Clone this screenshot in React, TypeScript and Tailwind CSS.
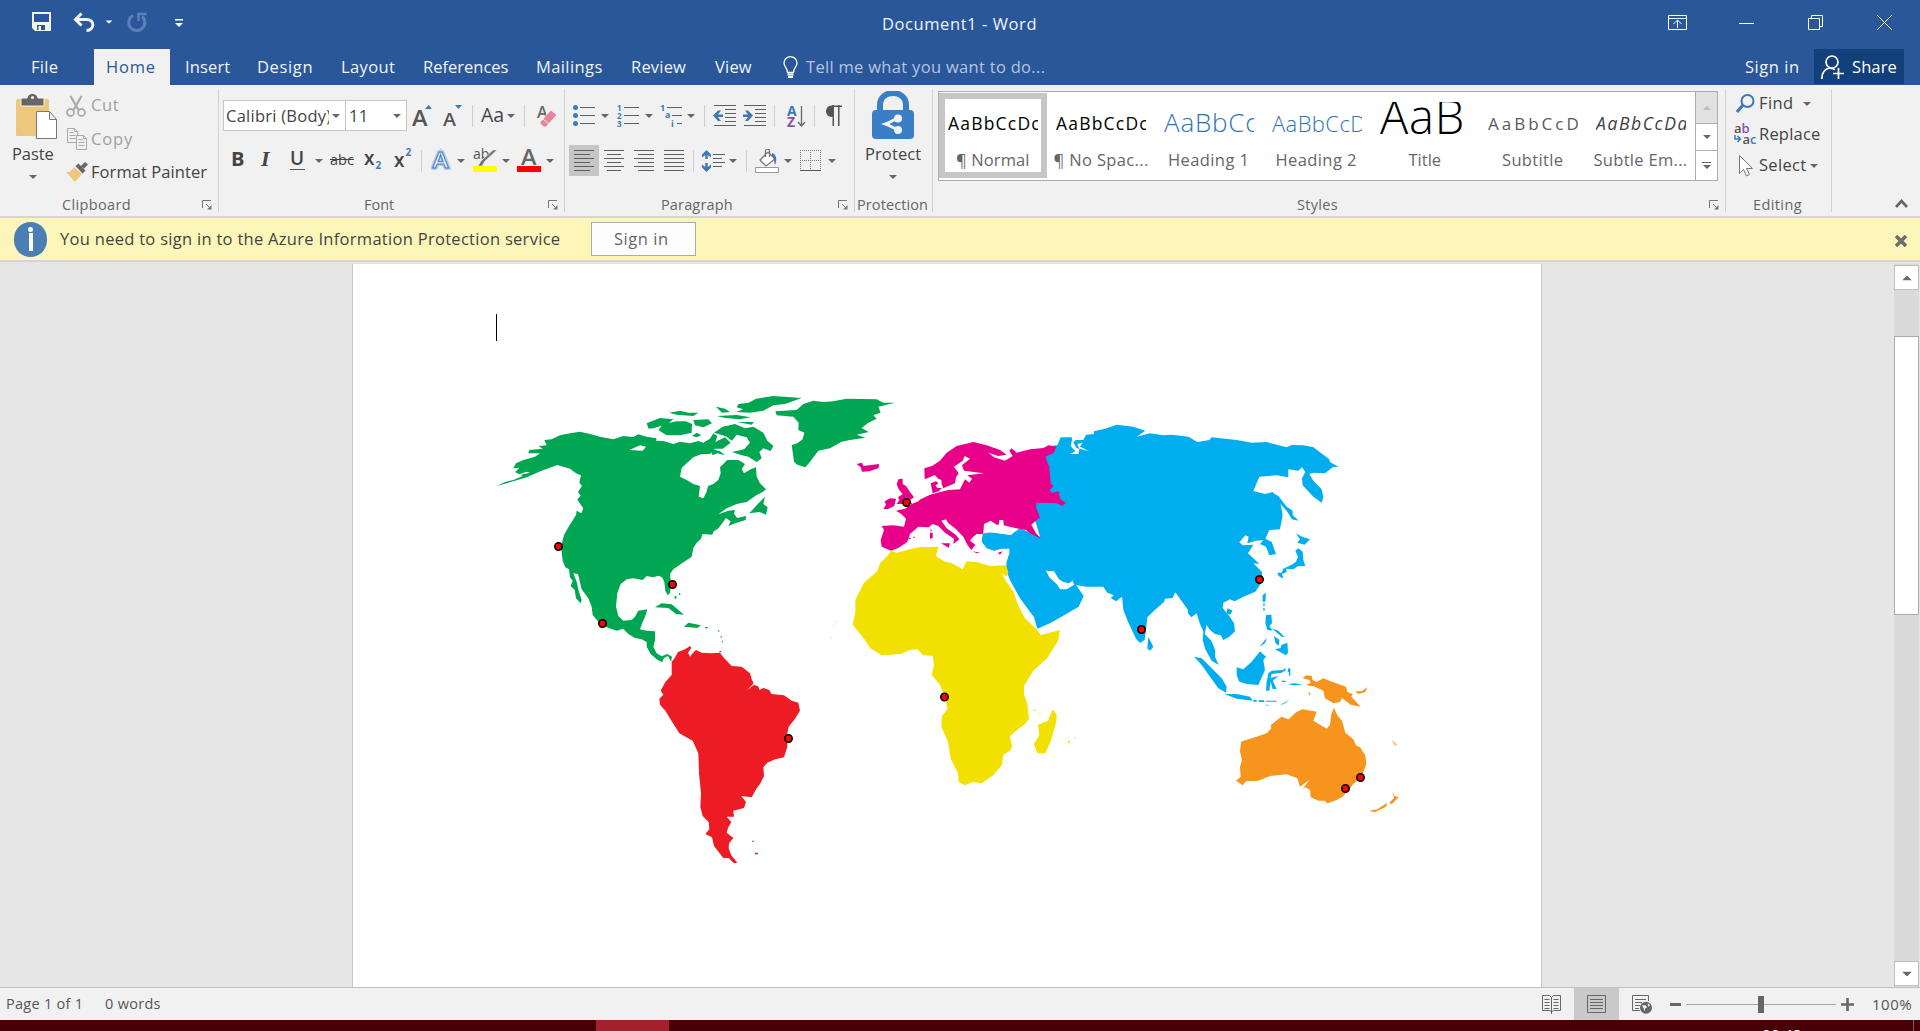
import React from "react";

const T = ({ c, children }: { c: string; children: React.ReactNode }) => (
  <span className={"block shrink-0 whitespace-pre leading-5 " + c}>{children}</span>
);

const Arrow = ({ c = "" }: { c?: string }) => (
  <svg className={"h-1 w-2 shrink-0 " + c} viewBox="0 0 8 4"><path d="M0 0h8L4 4z" fill="currentColor" /></svg>
);

const Sep = ({ c }: { c: string }) => <div className={"h-[22px] w-px shrink-0 bg-[#d0d0d0] " + c} />;
const Divider = () => <div className="mt-1 h-[123px] w-px shrink-0 bg-[#d2d2d2]" />;

const Launcher = ({ c = "" }: { c?: string }) => (
  <svg className={"absolute top-[6px] h-[10px] w-[10px] " + c} viewBox="0 0 10 10" fill="none" stroke="#777">
    <path d="M.5 8V.5H9M4 4l4 4" /><path d="M9.500 5v4.500H5z" fill="#777" stroke="none" />
  </svg>
);

const Label = ({ children, launcher }: { children: React.ReactNode; launcher?: string }) => (
  <div className="relative flex h-[22px] w-full items-center text-[14.5px] text-[#666]">
    {children}
    {launcher && <Launcher c={launcher} />}
  </div>
);

const Lines = ({ rows, c }: { rows: [number, number][]; c: string }) => (
  <svg className={"h-[22px] w-5 shrink-0 " + c} viewBox="0 0 20 22" stroke="#5f5f5f">
    {rows.map(([a, b], i) => <path key={i} d={`M${a} ${0.5 + i * 4}H${b}`} />)}
  </svg>
);

const Sample = ({ c, name, text, n, sel }: { c: string; name: string; text: string; n: string; sel?: boolean }) => (
  <div className={"flex h-[85px] w-[108px] shrink-0 flex-col " + (sel ? "border-[6px] border-[#c6c6c6] px-[3px]" : "px-[9px] py-[6px]")}>
    <div className="mt-[3px] h-[42px] w-[90px] overflow-hidden"><div className={"whitespace-pre " + c}>{text}</div></div>
    <div className="mt-[6px] flex justify-center text-[16.5px] text-[#666]"><T c={n}>{name}</T></div>
  </div>
);

const WorldMap = () => (
  <svg className="block h-[490px] w-[920px]" viewBox="490 390 920 490">
    <g transform="translate(480 380) scale(.33333)" fill="#00a651">
      <path d="M50 318L75 306 100 300 128 288 122 284 150 278 140 275 118 283 105 276 118 264 100 265 108 250 130 240 165 230 180 220 145 220 148 210 188 206 176 198 200 196 193 180 215 178 240 166 270 160 300 155 330 162 360 170 400 178 430 168 460 171 475 163 500 170 530 175 528 182 550 183 580 192 600 185 630 190 655 183 670 188 690 176 700 160 712 168 706 186 735 172 752 188 728 206 705 206 690 222 665 222 640 232 620 250 605 264 600 290 620 300 640 312 660 318 656 350 670 355 680 335 684 318 700 312 715 300 722 280 720 262 742 240 775 240 795 252 785 268 792 280 812 268 828 262 830 290 840 310 858 328 848 336 830 345 800 366 770 372 740 385 715 403 745 392 765 390 762 402 772 414 798 408 797 420 770 428 745 438 752 424 738 414 725 432 715 445 700 455 697 464 668 462 662 478 650 488 640 504 635 530 606 550 580 568 570 582 573 612 570 638 563 646 556 632 553 606 546 592 535 587 520 592 500 588 488 600 460 595 440 598 422 612 412 640 408 680 415 708 430 722 455 720 465 710 475 692 502 688 496 708 487 728 480 748 500 752 525 754 525 780 520 800 530 820 545 829 562 822 576 830 573 845 564 828 552 834 546 847 530 838 512 822 500 800 500 786 485 778 465 774 445 762 430 746 410 752 380 742 355 725 338 705 335 680 325 655 305 628 294 582 280 580 290 605 296 632 305 660 302 670 288 655 284 630 272 618 278 602 270 592 267 568 256 562 248 542 243 500 252 465 266 440 288 405 290 392 304 400 310 385 298 368 292 358 302 347 294 335 306 318 298 308 303 286 288 280 270 266 232 255 185 272 140 292 100 304Z" />
      <path d="M808 400L830 376 855 350 850 372 863 382 858 404 838 396ZM702 158L728 140 765 132 795 145 820 140 850 158 862 182 880 198 872 213 850 205 838 216 845 235 830 246 805 230 780 224 756 216 792 208 810 188 800 172 770 164 756 182 740 170 725 165ZM535 150L550 132 590 124 618 124 636 132 635 158 600 166 560 166ZM500 130L540 114 580 118 562 132 520 145 506 146ZM568 98L600 92 625 98 655 98 640 108 590 104ZM640 120L685 118 696 130 670 142 645 136ZM636 168L650 158 664 166 650 172ZM690 206L720 214 735 226 712 220 698 226ZM710 108L770 105 812 112 780 118 736 114ZM768 96L790 88 770 82 776 72 806 68 828 56 880 48 965 54 915 72 880 76 850 92 810 98ZM708 80L735 86 750 96 726 98ZM770 126L822 126 815 134ZM886 94L950 90 970 72 1000 62 1030 66 1060 64 1100 56 1190 58 1210 68 1245 68 1195 80 1202 98 1180 106 1190 116 1165 128 1145 144 1166 156 1130 164 1156 173 1110 180 1085 185 1050 205 1015 212 990 245 976 262 952 254 942 245 938 215 935 195 952 190 968 178 973 158 955 150 956 128 940 110 890 106ZM525 682L545 670 575 673 612 704 588 702 565 684ZM612 740L625 728 663 736 652 744ZM584 648h5v8h-5ZM597 640h4v5h-4ZM675 741h8v4h-8ZM722 768h3v5h-3ZM726 782h3v5h-3ZM715 750h3v5h-3ZM718 813h6v4h-6Z" />
      <path d="M448 210L480 196 498 200 488 212Z" fill="#fff" />
    </g>
    <g transform="translate(640 630) scale(.33333)" fill="#ed1c24">
      <path d="M95 95L104 84 114 66 135 58 150 48 154 54 144 68 150 80 158 70 168 60 185 68 215 70 240 68 250 82 275 108 305 110 330 130 335 148 341 160 320 182 342 164 356 170 358 180 370 174 388 180 394 192 432 196 455 212 475 218 480 242 464 268 446 290 441 315 442 350 432 382 405 388 382 398 370 412 372 438 360 462 350 475 335 502 304 498 318 516 312 534 280 542 282 560 260 560 274 576 264 594 260 608 280 624 267 640 266 655 274 676 292 698 282 700 266 684 250 684 222 648 216 622 196 612 208 598 206 576 188 558 181 530 183 490 177 430 175 370 158 332 118 310 98 278 76 242 60 224 58 206 70 194 62 182 76 156 95 135ZM336 632h6v3h-6ZM344 668h10v5h-8Z" />
    </g>
    <g transform="translate(970 410) scale(.33333)" fill="#00aeef">
      <path d="M240 108L262 106 272 82 305 82 308 98 318 90 340 90 348 74 372 72 372 64 405 56 440 44 490 50 526 62 500 80 540 70 580 76 605 74 655 80 682 96 718 90 725 82 800 90 845 98 890 96 950 112 965 105 1000 106 1030 112 1078 148 1080 156 1105 170 1088 172 1065 190 1030 188 1018 192 1030 212 1055 238 1060 262 1055 278 1030 260 998 226 996 205 1006 186 996 172 985 182 955 178 955 202 920 196 868 200 850 243 885 252 908 246 930 272 938 315 930 358 898 360 886 386 905 396 918 432 898 436 888 410 870 402 880 390 858 392 832 400 836 380 826 376 808 397 818 406 850 404 834 430 868 462 850 460 876 486 876 515 856 545 820 560 794 574 780 568 760 578 758 594 778 618 792 640 795 664 778 680 760 690 752 676 735 672 720 660 710 645 704 672 724 692 736 722 735 740 746 765 725 752 706 718 698 690 700 664 690 642 680 610 664 622 654 610 654 600 630 566 616 547 608 564 585 566 582 576 552 602 532 622 528 660 524 690 510 699 498 686 474 635 460 600 456 560 438 574 422 564 432 556 412 548 400 530 350 530 312 524 308 512 296 520 278 515 266 506 252 484 228 482 238 502 262 524 270 538 290 538 316 522 341 558 326 590 282 616 240 640 202 656 192 622 150 565 120 510 108 480 110 455 118 430 118 416 95 416 72 422 50 415 35 395 38 372 55 366 120 375 150 355 210 380 180 280 225 135Z" />
      <path d="M910 250L925 258 950 290 968 302 968 315 986 332 966 328 952 305 930 280ZM978 370L996 380 1020 388 1004 404 982 398 990 388ZM985 415L998 425 1000 450 1006 468 985 468 970 478 948 476 950 486 936 492 940 506 926 498 922 488 935 488 940 476 965 464 978 455 984 440 976 422ZM888 548L886 575 878 575 878 556ZM772 595L788 602 780 614 770 610ZM535 680L550 710 540 722 532 715ZM888 615L904 614 906 640 898 648 908 662 892 660 886 640ZM880 580h4v8h-4ZM880 594h4v8h-4ZM905 655L925 662 944 682 935 680ZM912 678L928 690 926 708 916 698ZM868 712L890 683 886 698ZM934 705L952 698 954 728 948 736 915 718 932 714ZM672 740L695 745 725 775 755 805 770 830 768 848 745 835 720 800 695 765ZM763 852L800 852 840 860 848 872 800 866ZM800 772L820 778 845 755 870 724 888 740 880 750 885 780 865 825 830 822 808 815 800 795ZM895 790L905 782 940 780 944 774 948 780 935 788 905 792 902 804 926 798 908 812 920 836 908 838 902 815 898 842 888 842 890 815ZM955 775h6v22h-4v-10h-4ZM953 822L975 820 998 824 970 826ZM850 870h10v5h-10ZM866 871h16v5h-16ZM888 872h32v3h-32ZM885 882L902 888 890 886ZM926 888L960 868 945 880ZM935 812h12v4h-12Z" />
      <path d="M42 345L58 333 82 345 86 330 98 332 102 348 130 354 134 364 122 374 70 366 40 368Z" fill="#fff" />
      <path d="M306 90L318 112 328 118 325 132 300 132 316 124 302 108ZM338 98L330 110 358 124 328 116 322 102Z" fill="#fff" />
    </g>
    <g transform="translate(830 420) scale(.33333)" fill="#e8008a">
      <path d="M155 318L190 316 222 320 228 296 214 282 198 272 225 266 245 252 265 244 282 228 302 220 300 190 284 175 283 145 306 138 330 122 350 98 380 78 430 66 470 76 510 90 530 104 505 108 475 98 492 112 525 122 548 108 538 92 545 85 560 98 600 88 640 84 655 76 680 80 670 100 646 110 658 142 662 190 670 198 658 212 668 218 686 214 690 236 707 248 698 258 680 250 640 248 618 250 620 268 630 292 604 314 618 340 634 357 600 340 588 330 545 322 465 315 460 342 440 342 428 352 420 362 436 374 424 390 412 374 400 350 375 325 355 310 348 298 334 302 350 325 378 345 388 358 370 372 372 356 345 338 325 318 308 312 296 322 265 320 240 342 232 366 205 384 183 392 155 380 152 360 162 330ZM205 178L218 176 218 192 228 198 240 216 252 232 240 240 246 252 200 252 208 240 204 232 218 222 206 208 200 192ZM160 266L168 254 164 244 180 235 198 236 193 258 172 268ZM80 132L96 128 100 138 147 132 146 144 118 154 96 155 92 142ZM333 370L360 370 356 383ZM300 338L308 338 308 354 300 356ZM302 324L306 334 302 334ZM428 394L450 398 440 400ZM504 398L518 394 510 404ZM236 354h6v3h-6ZM250 350h5v3h-5Z" />
      <path d="M420 116L404 108 398 122 372 140 386 160 378 172 375 190 350 200 340 205 335 192 334 180 325 176 314 165 285 178 280 200 272 238 300 224 322 218 355 210 390 208 405 178 418 188 426 176 412 166 462 160 432 156 402 152 396 136Z" fill="#fff" />
      <path d="M302 190L318 184 326 190 316 196 322 204 336 204 326 214 308 220Z" />
      <path d="M462 312L482 302 500 314 506 314 508 300 520 300 521 316 545 322 553 334 545 344 520 340 490 335 460 340Z" fill="#fff" />
    </g>
    <g transform="translate(830 420) scale(.33333)" fill="#f2e000">
      <path d="M183 393L200 398 232 390 265 382 325 380 318 408 342 424 366 430 398 448 410 424 440 426 480 438 528 436 535 456 530 470 515 458 528 484 550 514 562 550 574 574 584 594 618 626 632 645 690 630 684 662 652 714 610 752 582 798 582 824 592 850 597 896 585 912 566 926 540 948 546 980 540 992 520 1004 516 1034 490 1066 455 1090 428 1086 405 1096 386 1086 384 1060 362 1016 354 965 334 920 336 888 352 868 346 832 330 795 305 764 312 735 308 708 280 706 262 688 240 690 212 702 155 706 120 684 102 656 68 614 76 578 76 540 102 488 142 454 150 430 172 408ZM668 868L680 884 679 906 662 964 646 1000 622 1000 612 972 628 945 624 914 654 902ZM612 869h5v4h-5ZM627 880h5v3h-5ZM714 963h6v5h-6ZM734 954h4v3h-4ZM0 653h4v4h-4ZM12 615h3v4h-3ZM17 605h3v4h-3Z" />
    </g>
    <g transform="translate(1140 560) scale(.33333)" fill="#f7941d">
      <path d="M303 545L318 540 350 530 380 520 394 505 392 496 424 470 446 478 465 460 488 448 530 455 520 482 560 506 570 494 574 462 582 443 592 466 606 482 616 518 640 538 648 556 660 562 676 586 679 612 665 650 640 672 608 710 585 722 562 730 554 722 535 722 512 712 510 690 496 682 488 686 508 660 480 680 472 655 440 643 390 648 355 662 318 664 308 676 288 662 302 650 300 620 306 600 300 575ZM488 355L498 346 515 348 518 360 530 366 550 355 578 366 618 380 622 396 638 402 634 410 662 440 632 434 606 414 600 426 580 430 555 415 550 392 520 378 508 378 500 374 512 368 508 360ZM645 394L665 394 682 382 676 396 655 402ZM505 396L512 400 508 408ZM466 458L482 450 480 458ZM688 752L712 748 742 728 738 740 704 757ZM758 694L764 708 776 712 755 733 748 728 762 714ZM754 538L771 556 764 554Z" />
    </g>
    <g fill="red" stroke="#000" strokeWidth="1.600">
      {[[558.5, 546.5], [672.5, 584.5], [602.5, 623.5], [788.5, 738.5], [906.5, 502.5], [944.5, 697], [1259.500, 579.500], [1141.500, 629.500], [1345.500, 788.500], [1360.500, 777.500]].map(([x, y]) => <circle key={x} cx={x} cy={y} r="3.700" />)}
    </g>
  </svg>
);

export default function App() {
  return (
    <div className="flex h-[1031px] w-[1920px] flex-col overflow-hidden bg-[#e6e6e6] font-['Open_Sans','Noto_Sans',sans-serif] text-[16.5px] text-[#444]">
      <header className="h-[85px] shrink-0 bg-[#2a579a] text-[#f0f3f8]">
        <div className="flex h-[49px] items-start">
          <svg className="ml-8 mt-3 h-[19px] w-[19px]" viewBox="0 0 19 19"><path fillRule="evenodd" d="M0 0h19v19H3l-3-3zM2 2v8h15V2zM5 13v5h1.500v-4H9v4h4v-5z" fill="#f3f3f3" /></svg>
          <svg className="ml-[22px] mt-3 h-5 w-[23px]" viewBox="0 0 23 20" fill="none" stroke="#f3f3f3" strokeWidth="3"><path d="M2 7.500h11.500c8.500 0 8.500 10.500 0 11" /><path d="M8.500 1.500L2.500 7.500l6 6" /></svg>
          <Arrow c="ml-[9px] mt-5 scale-90" />
          <svg className="ml-[14px] mt-3 h-5 w-5 text-[#5f80b5]" viewBox="0 0 20 20" fill="none" stroke="currentColor" strokeWidth="3"><path d="M6 3.500a8 8 0 1 0 9 1" /><path d="M11.500 1v8M11 2h8.500" strokeWidth="2.500" /></svg>
          <svg className="ml-[28px] mt-[19px] h-2 w-2" viewBox="0 0 8 8" fill="#fff"><path d="M0 0h8v1.500H0zM0 4h8L4 8z" /></svg>
          <T c="ml-[699px] mt-[14px] w-[154px] tracking-[0.58px]">Document1 - Word</T>
          <svg className="ml-[632px] mt-[15px] h-[15px] w-[19px]" viewBox="0 0 19 15" fill="none" stroke="#fff"><path d="M.5.5h18v14H.5zM.5 3.500h18M9.500 13V5.500M5.500 9l4-4 4 4" /></svg>
          <div className="ml-[52px] mt-[23px] h-px w-[15px] bg-white" />
          <svg className="ml-[54px] mt-[15px] h-[15px] w-[15px]" viewBox="0 0 15 15" fill="none" stroke="#fff"><path d="M.5 3.500h11v11H.5zM3.500 3.500v-3h11v11h-3" /></svg>
          <svg className="ml-[54px] mt-[15px] h-[15px] w-[15px]" viewBox="0 0 15 15" stroke="#fff"><path d="M0 0l15 15M15 0L0 15" /></svg>
        </div>
        <nav className="flex h-9 items-center">
          <T c="ml-[31px] w-[26px] tracking-[0.3px]">File</T>
          <div className="ml-[37px] flex h-9 w-[76px] items-center bg-[#f1f1f1] text-[#2a579a]"><T c="ml-[12px] w-[50px] tracking-[0.8px]">Home</T></div>
          <T c="ml-[15px] w-[44px] tracking-[0.15px]">Insert</T>
          <T c="ml-[28px] w-[56px] tracking-[0.65px]">Design</T>
          <T c="ml-[28px] w-[54px] tracking-[0.4px]">Layout</T>
          <T c="ml-[28px] w-[85px]">References</T>
          <T c="ml-[28px] w-[66px] tracking-[0.4px]">Mailings</T>
          <T c="ml-[29px] w-[55px] tracking-[0.2px]">Review</T>
          <T c="ml-[29px] w-[37px] tracking-[0.2px]">View</T>
          <svg className="ml-[31px] h-[22px] w-[15px]" viewBox="0 0 15 22" fill="none" stroke="#fff" strokeWidth="1.300"><path d="M4.500 16.500C4.500 12 1 11 1 7a6.500 6.300 0 0 1 13 0c0 4-3.500 5-3.500 9.500z" /><path d="M4.500 18.500h6M5 21h5" strokeWidth="1.800" /></svg>
          <T c="ml-2 w-[238px] tracking-[0.31px] text-[#b4c5e0]">Tell me what you want to do...</T>
          <T c="ml-[701px] w-[54px] tracking-[0.55px]">Sign in</T>
          <div className="ml-[15px] mb-px flex h-[35px] w-[90px] items-center bg-[#12407a]">
            <svg className="ml-[7px] mt-px h-6 w-[23px]" viewBox="0 0 23 24" fill="none" stroke="#fff" strokeWidth="1.700"><circle cx="11" cy="7" r="6" /><path d="M.8 24C1 17.500 4 13.500 9 13l5 1.500M12 18.500h11M17.500 13v11" /></svg>
            <T c="ml-2 w-[45px] tracking-[0.1px] text-white">Share</T>
          </div>
        </nav>
      </header>

      <section className="flex h-[131px] shrink-0 bg-[#f1f1f1]">
        <div className="flex w-[218px] flex-col">
          <div className="flex h-[109px]">
            <div className="flex w-[66px] flex-col pt-2">
              <svg className="ml-[15px] h-[48px] w-[43px]" viewBox="15 93 43 48"><rect x="16" y="99" width="33" height="37" rx="1.500" fill="#eec77e" /><path d="M21 98h6c1-6 10-6 11 0h6v8H21z" fill="#666" stroke="#f1f1f1" /><circle cx="32.500" cy="97.500" r="1.600" fill="#f1f1f1" /><path d="M36.500 111.500h13l7 8v19h-20zM49.500 111.500v8h7" fill="#fff" stroke="#777" /></svg>
              <T c="ml-[12px] mt-[3px] w-[43px] tracking-[-0.1px]">Paste</T>
              <Arrow c="ml-[29px] mt-[11px] text-[#666]" />
            </div>
            <div className="flex flex-col pt-[4px]">
              <div className="flex h-[33px] items-center text-[#a0a0a0]">
                <svg className="h-[22px] w-5" viewBox="0 0 20 22" fill="none" stroke="#aaa" strokeWidth="1.800"><path d="M4.500 1l8 14M15.500 1l-8 14" strokeWidth="2.200" /><circle cx="4.500" cy="17.500" r="3.500" /><circle cx="15.500" cy="17.500" r="3.500" /></svg>
                <T c="ml-[5px] -mt-px w-[29px] tracking-[0.6px]">Cut</T>
              </div>
              <div className="flex h-[33px] items-center text-[#a0a0a0]">
                <svg className="ml-px h-[22px] w-5" viewBox="0 0 20 22" fill="#f1f1f1" stroke="#aaa"><path d="M.5.5h7l3 3v11H.5zM7.500.5v3h3M2.500 4.500h4M2.500 7.500h6M2.500 10.500h6" /><path d="M9.500 7.500h7l3 3v11h-10zM16.500 7.500v3h3M11.500 11.500h4M11.500 14.500h6M11.500 17.500h6" /></svg>
                <T c="ml-[4px] w-[43px] tracking-[0.9px]">Copy</T>
              </div>
              <div className="flex h-[33px] items-center">
                <svg className="h-5 w-[22px]" viewBox="0 0 22 20"><path d="M8 5l8 7-7 8L0 10c4 1 6-2 8-5z" fill="#eec77e" /><path d="M9.500 4l3-2.500 7 7-3 3zM15 4l4-4 3 2.500-4 4z" fill="#666" /></svg>
                <T c="ml-[3px] w-[117px] tracking-[0.07px]">Format Painter</T>
              </div>
            </div>
          </div>
          <Label launcher="left-[202px]"><T c="ml-[62px] w-[70px] tracking-[0.35px]">Clipboard</T></Label>
        </div>
        <Divider />

        <div className="flex w-[345px] flex-col">
          <div className="h-[109px] pt-[15px]">
            <div className="flex h-[31px] items-center">
              <div className="ml-1 flex h-[31px] w-[123px] items-center border border-[#c6c6c6] bg-white"><div className="ml-[2px] w-[103px] overflow-hidden"><T c="w-[106px] tracking-[0.25px]">Calibri (Body)</T></div><Arrow c="ml-[3px] text-[#666]" /></div>
              <div className="-ml-px flex h-[31px] w-[62px] items-center border border-[#c6c6c6] bg-white"><T c="ml-[3px] w-[20px] tracking-[0.2px]">11</T><Arrow c="ml-[24px] text-[#666]" /></div>
              <svg className="ml-[5px] h-[22px] w-5" viewBox="0 0 20 22"><text x="0" y="20.500" fontSize="21" fontWeight="600" fill="#555" textLength="15.500" lengthAdjust="spacingAndGlyphs">A</text><path d="M13 4h7l-3.500-4z" fill="#3f78b5" /></svg>
              <svg className="ml-[11px] h-[22px] w-[19px]" viewBox="0 0 19 22"><text x="0" y="20.500" fontSize="18" fontWeight="600" fill="#555" textLength="13" lengthAdjust="spacingAndGlyphs">A</text><path d="M12 0h7l-3.500 4z" fill="#3f78b5" /></svg>
              <Sep c="ml-[10px]" />
              <T c="ml-2 -mt-px w-[25px] text-[19.5px]">Aa</T><Arrow c="ml-px text-[#666]" />
              <Sep c="ml-[9px]" />
              <svg className="ml-3 h-[22px] w-5" viewBox="0 0 20 22"><text x="0" y="13" fontSize="16" fontWeight="600" fill="#666">A</text><path d="M3 17L14 5l6 5L9 22H7l-4-3z" fill="#e8849a" stroke="#f1f1f1" /><path d="M6 14l6 5" stroke="#f1f1f1" /></svg>
            </div>
            <div className="mt-[14px] flex h-[31px] items-center">
              <T c="-mt-[3px] ml-3 w-[14px] text-[20px] font-bold">B</T>
              <T c="-mt-[3px] ml-4 w-[11px] font-['Liberation_Serif'] text-[22px] font-bold italic">I</T>
              <div className="-mt-[3px] ml-[18px] h-[21px] w-[15px] border-b border-[#555]"><T c="-mt-px w-[15px] text-[19px] font-semibold">U</T></div>
              <Arrow c="ml-[10px] text-[#666]" />
              <T c="ml-[7px] -mt-px w-[25px] text-[14.5px] line-through">abc</T>
              <div className="-mt-[2px] ml-[9px] flex w-[20px]"><T c="text-[19px] font-semibold">x</T><span className="mt-[11px] ml-px text-[10px] font-bold leading-3 text-[#3f78b5]">2</span></div>
              <div className="-mt-[2px] ml-[10px] flex w-[20px]"><T c="text-[19px] font-semibold">x</T><span className="-mt-[4px] ml-px text-[10px] font-bold leading-3 text-[#3f78b5]">2</span></div>
              <Sep c="ml-[7px]" />
              <svg className="-mt-[2px] ml-[9px] h-[24px] w-5" viewBox="0 0 20 24"><text x="1.500" y="20" fontSize="22" fontWeight="600" fill="#fff" stroke="#b9d3ee" strokeWidth="4" textLength="16" lengthAdjust="spacingAndGlyphs">A</text><text x="1.500" y="20" fontSize="22" fontWeight="600" fill="#fff" stroke="#3f78b5" textLength="16" lengthAdjust="spacingAndGlyphs">A</text></svg>
              <Arrow c="ml-[6px] text-[#666]" />
              <svg className="-mt-px ml-2 h-6 w-6" viewBox="0 0 24 24"><text x="0" y="11" fontSize="14" fill="#555">ab</text><path d="M24 2L12 13l-3 5-4 0 3-5L20 2z" fill="#777" stroke="#f1f1f1" strokeWidth=".5" /><path d="M0 18h24v6H0z" fill="#ff0" /></svg>
              <Arrow c="ml-[5px] text-[#666]" />
              <svg className="-mt-px ml-[7px] h-6 w-6" viewBox="0 0 24 24"><text x="4" y="16.500" fontSize="21" fontWeight="600" fill="#666" textLength="15.500" lengthAdjust="spacingAndGlyphs">A</text><path d="M0 18h24v6H0z" fill="red" /></svg>
              <Arrow c="ml-[5px] text-[#666]" />
            </div>
          </div>
          <Label launcher="left-[329px]"><T c="ml-[145px] w-[32px]">Font</T></Label>
        </div>
        <Divider />

        <div className="flex w-[289px] flex-col">
          <div className="h-[109px] pt-[15px]">
            <div className="flex h-[31px] items-center">
              <svg className="ml-2 h-[22px] w-[22px]" viewBox="0 0 22 22" stroke="#5f5f5f"><path d="M7 2.500h15M7 10.500h15M7 18.500h15" /><g fill="#3f78b5" stroke="none"><circle cx="2.500" cy="2.500" r="2.500" /><circle cx="2.500" cy="10.500" r="2.500" /><circle cx="2.500" cy="18.500" r="2.500" /></g></svg>
              <Arrow c="ml-[6px] text-[#666]" />
              <svg className="ml-2 h-[22px] w-[22px]" viewBox="0 0 22 22" fill="#3f78b5"><path d="M7 2.500h15M7 10.500h15M7 18.500h15" stroke="#5f5f5f" /><g fontSize="8" fontWeight="700"><text x="0" y="6">1</text><text x="0" y="14">2</text><text x="0" y="22">3</text></g></svg>
              <Arrow c="ml-[6px] text-[#666]" />
              <svg className="ml-[7px] h-[22px] w-[23px]" viewBox="0 0 23 22" fill="#3f78b5"><path d="M7 2.500h15M12 10.500h10M17 18.500h5" stroke="#5f5f5f" /><g fontSize="9" fontWeight="700"><text x="0" y="6">1</text><text x="5" y="13">a</text><text x="11" y="22">i</text></g></svg>
              <Arrow c="ml-1 text-[#666]" />
              <Sep c="ml-[9px]" />
              <svg className="ml-2 h-[22px] w-6" viewBox="0 0 24 22" stroke="#5f5f5f"><path d="M1 .5h22M12 4.500h11M12 8.500h11M12 12.500h11M12 16.500h11M1 20.500h22" /><path d="M0 10.500l5-5h3l-3 4h5v2.500H5l3 4H5z" fill="#3f78b5" stroke="none" /></svg>
              <svg className="ml-[6px] h-[22px] w-6" viewBox="0 0 24 22" stroke="#5f5f5f"><path d="M1 .5h22M12 4.500h11M12 8.500h11M12 12.500h11M12 16.500h11M1 20.500h22" /><path d="M10 10.500l-5-5H2l3 4H0v2.500h5l-3 4h3z" fill="#3f78b5" stroke="none" /></svg>
              <Sep c="ml-[7px]" />
              <svg className="ml-[11px] h-6 w-5" viewBox="0 0 20 24" fontSize="14" fontWeight="700"><text x="1" y="11.500" fill="#3f78b5">A</text><text x="1" y="22.500" fill="#8d50a8">Z</text><path d="M15.500 2v20M12 18l3.500 4 3.500-4" stroke="#666" strokeWidth="1.300" fill="none" /></svg>
              <Sep c="ml-2" />
              <svg className="ml-[11px] h-[21px] w-4" viewBox="0 0 16 21"><path d="M6 12C-2 12-2 .5 6 .5h10V2H6z" fill="#555" /><path d="M6 0h2v21H6.500V12L4 11zM12 0h1.500v21H12z" fill="#555" /></svg>
            </div>
            <div className="mt-[14px] flex h-[31px] items-center">
              <div className="ml-1 flex h-[31px] w-[30px] items-center bg-[#c6c6c6] pt-[1px]"><Lines c="ml-[5px]" rows={[[0, 20], [0, 16], [0, 20], [0, 16], [0, 20], [0, 16]]} /></div>
              <Lines c="ml-[5px] mt-px" rows={[[0, 20], [3, 17], [0, 20], [3, 17], [0, 20], [3, 17]]} />
              <Lines c="ml-[10px] mt-px" rows={[[0, 20], [4, 20], [0, 20], [4, 20], [0, 20], [4, 20]]} />
              <Lines c="ml-[10px] mt-px" rows={[[0, 20], [0, 20], [0, 20], [0, 20], [0, 20], [0, 20]]} />
              <Sep c="ml-[9px]" />
              <svg className="ml-2 h-[22px] w-[23px]" viewBox="0 0 23 22"><path d="M11 4.500h12M11 8.500h9M11 12.500h12M11 16.500h9" stroke="#5f5f5f" /><path d="M4.500 0L9 4.500v3L5.700 5v4H3.300V5L0 7.500v-3zM4.500 22L9 17.500v-3L5.700 17v-4H3.300v4L0 14.500v3z" fill="#3f78b5" /></svg>
              <Arrow c="ml-1 text-[#666]" />
              <Sep c="ml-[9px]" />
              <svg className="ml-2 h-6 w-6" viewBox="0 0 24 24" fill="none" stroke="#777"><path d="M13 3l7 7-9 7-6-6 8-8M10.500 8V2a2 2 0 0 1 4 0v6" strokeWidth="1.300" fill="#fff" /><path d="M17 4c5 1 5 8 3 12-1-3 0-6-3-9z" fill="#3f78b5" stroke="none" /><path d="M.5 18.500h23v5H.5z" fill="#fff" stroke="#999" /></svg>
              <Arrow c="ml-[5px] text-[#666]" />
              <svg className="ml-2 h-[22px] w-[22px]" viewBox="0 0 22 22" fill="none" stroke="#777"><path d="M0 .5h21M0 10.500h21M.5 0v20M10.500 0v20M20.500 0v20" strokeDasharray="1 1" /><path d="M0 20.500h21" stroke="#555" /></svg>
              <Arrow c="ml-[6px] text-[#666]" />
            </div>
          </div>
          <Label launcher="left-[273px]"><T c="ml-[96px] w-[73px] tracking-[0.15px]">Paragraph</T></Label>
        </div>
        <Divider />

        <div className="flex w-[77px] flex-col">
          <div className="flex h-[109px] flex-col pt-[6px]">
            <svg className="ml-[17px] h-12 w-[42px]" viewBox="0 0 42 48"><path d="M8 22V14C8-2 34-2 34 14v8" fill="none" stroke="#3a7fc6" strokeWidth="6" /><rect y="19" width="42" height="29" rx="4" fill="#3a7fc6" /><path d="M26 27L14 33l12 6" fill="none" stroke="#f1f1f1" strokeWidth="3" /><circle cx="26" cy="27.500" r="4" fill="#f1f1f1" /><circle cx="26" cy="39" r="4" fill="#f1f1f1" /><path d="M9 33l9-3v6z" fill="#f1f1f1" /></svg>
            <T c="ml-[10px] mt-[5px] w-[57px] tracking-[0.1px]">Protect</T>
            <Arrow c="ml-[34px] mt-[11px] text-[#666]" />
          </div>
          <Label><T c="ml-[2px] w-[72px] tracking-[0.1px]">Protection</T></Label>
        </div>
        <Divider />

        <div className="flex w-[792px] flex-col">
          <div className="h-[109px] pt-[6px]">
            <div className="ml-[5px] flex h-[90px] w-[780px] border border-[#abadb3] bg-white pt-px">
              <Sample sel name="¶ Normal" text="AaBbCcDc" n="w-[74px] tracking-[0.1px]" c="text-[17.5px] tracking-[1.2px] leading-[42px] text-black" />
              <Sample name="¶ No Spac..." text="AaBbCcDc" n="w-[95px] tracking-[0.35px]" c="text-[17.5px] tracking-[1.2px] leading-[42px] text-black" />
              <Sample name="Heading 1" text="AaBbCc" n="w-[82px] tracking-[0.4px]" c="text-[26px] tracking-[0.8px] leading-[41px] font-light text-[#2e74b5]" />
              <Sample name="Heading 2" text="AaBbCcD" n="w-[83px] tracking-[0.4px]" c="text-[22px] tracking-[0.4px] leading-[43px] font-light text-[#2e74b5]" />
              <Sample name="Title" text="AaB" n="w-[33px]" c="text-[47px] tracking-[0.8px] leading-[28px] font-light text-black" />
              <Sample name="Subtitle" text="AaBbCcD" n="w-[62px] tracking-[0.35px]" c="text-[17px] tracking-[3px] leading-[43px] text-[#5a5a5a]" />
              <Sample name="Subtle Em..." text="AaBbCcDa" n="w-[95px] tracking-[0.3px]" c="text-[17.5px] tracking-[1.6px] leading-[42px] italic text-[#404040]" />
              <div className="-mt-px ml-auto flex w-[22px] flex-col border-l border-[#abadb3] text-[#666]">
                <div className="flex h-[31px] items-center justify-center bg-[#e1e1e1] text-[#bbb]"><Arrow c="rotate-180" /></div>
                <div className="flex h-7 items-center justify-center border-y border-[#abadb3]"><Arrow /></div>
                <div className="flex flex-1 flex-col items-center justify-center"><div className="mb-[2px] h-px w-[9px] bg-[#666]" /><Arrow /></div>
              </div>
            </div>
          </div>
          <Label launcher="left-[776px]"><T c="ml-[364px] w-[42px] tracking-[0.3px]">Styles</T></Label>
        </div>
        <Divider />

        <div className="flex w-[105px] flex-col">
          <div className="h-[109px] pt-[3px]">
            <div className="flex h-[31px] items-center">
              <svg className="ml-[10px] h-5 w-[19px]" viewBox="0 0 19 20" fill="none" stroke="#3f78b5"><circle cx="11.500" cy="7" r="6" strokeWidth="2" /><path d="M7 11l-6 7" strokeWidth="3" /></svg>
              <T c="ml-[4px] -mt-px w-[35px] tracking-[0.4px]">Find</T><Arrow c="ml-[9px] text-[#666]" />
            </div>
            <div className="flex h-[31px] items-center">
              <svg className="ml-2 h-[23px] w-6" viewBox="0 0 24 23" fontSize="13" fontWeight="600"><text x="0" y="10" fill="#555">a<tspan fill="#8d50a8">b</tspan></text><text x="8.500" y="21" fill="#555">a<tspan fill="#3f78b5">c</tspan></text><path d="M1 12v4h5M3.500 13l3 3-3 3" stroke="#3f78b5" strokeWidth="1.500" fill="none" /></svg>
              <T c="ml-[1px] -mt-px w-[62px] tracking-[0.2px]">Replace</T>
            </div>
            <div className="flex h-[31px] items-center">
              <svg className="ml-[13px] h-[22px] w-[14px]" viewBox="0 0 14 22" fill="#fff" stroke="#777"><path d="M.5.5v18l4-4 3 6.500 3-1.500-3-6h6z" /></svg>
              <T c="ml-[6px] -mt-px w-[48px] tracking-[0.3px]">Select</T><Arrow c="ml-[3px] text-[#666]" />
            </div>
          </div>
          <Label><T c="ml-[27px] w-[50px] tracking-[0.4px]">Editing</T></Label>
        </div>
        <Divider />
        <svg className="ml-[63px] mt-[114px] h-[9px] w-[13px]" viewBox="0 0 13 9" fill="none" stroke="#666" strokeWidth="2.600"><path d="M1 8l5.500-6L12 8" /></svg>
      </section>

      <section className="flex h-[46px] shrink-0 items-center border-y-2 border-[#d5d5d5] bg-[#fcf6b8]">
        <div className="ml-[14px] flex h-[35px] w-[33px] flex-col items-center rounded-full bg-[#4a7eb5] pt-[5px]"><div className="h-[5px] w-[5px] rounded-full bg-white" /><div className="mt-px h-[18px] w-1 bg-white" /></div>
        <T c="ml-[13px] w-[501px] tracking-[0.29px]">You need to sign in to the Azure Information Protection service</T>
        <div className="ml-[30px] flex h-[34px] w-[105px] items-center border border-[#ababab] bg-[#fdfdfd] text-[#666]"><T c="ml-[22px] w-[55px] tracking-[0.55px]">Sign in</T></div>
        <svg className="ml-auto mr-[13px] mt-1 h-3 w-3" viewBox="0 0 12 12" stroke="#6e6e6e" strokeWidth="3.600"><path d="M1 1l10 10M11 1L1 11" /></svg>
      </section>

      <main className="flex h-[725px] shrink-0">
        <div className="ml-[352px] mt-[2px] w-[1190px] border-x border-[#c6c6c6] bg-white">
          <div className="ml-[143px] mt-[50px] h-[27px] w-px bg-black" />
          <div className="ml-[137px] mt-[49px]"><WorldMap /></div>
        </div>
        <div className="ml-[352px] mt-[2px] flex w-[25px] flex-col bg-[#dadada]">
          <div className="mt-px flex h-[25px] items-center justify-center border border-[#bfbfbf] bg-white text-[#6a6a6a]"><Arrow c="rotate-180 scale-125" /></div>
          <div className="mt-[46px] h-[279px] border border-[#ababab] bg-white" />
          <div className="mb-px mt-auto flex h-[25px] items-center justify-center border border-[#bfbfbf] bg-white text-[#6a6a6a]"><Arrow c="scale-125" /></div>
        </div>
      </main>

      <footer className="flex h-[33px] shrink-0 items-center border-t border-[#bfbfbf] bg-[#f1f1f1] text-[14.5px] text-[#555]">
        <T c="ml-[6px] w-[78px] tracking-[0.28px]">Page 1 of 1</T>
        <T c="ml-[21px] w-[57px] tracking-[0.3px]">0 words</T>
        <svg className="ml-[1380px] h-[19px] w-[19px]" viewBox="0 0 19 19" fill="none" stroke="#666"><path d="M.5.500h7l2 2 2-2h7v15h-7l-2 1-2-1h-7zM9.500 2v17M2.500 4.500h5M2.500 7.500h5M2.500 10.500h5M2.500 13.500h5M11.500 4.500h5M11.500 7.500h5M11.500 10.500h5M11.500 13.500h5" /></svg>
        <div className="ml-[13px] flex h-8 w-[45px] items-center justify-center bg-[#c9c9c9]"><svg className="h-[19px] w-[19px]" viewBox="0 0 19 19" fill="none" stroke="#666"><path d="M.5.500h18v17H.5zM3 4.500h13M3 7.500h13M3 10.500h13M3 13.500h13" /></svg></div>
        <svg className="ml-[13px] h-[19px] w-5" viewBox="0 0 20 19" fill="none" stroke="#666"><path d="M8 15.500H.5V.500h16V6M3 4.500h11M3 7.500h7M3 10.500h5M3 13.500h4" /><circle cx="14" cy="12.700" r="6" fill="#666" stroke="none" /><path d="M10 10l4 .5 1 2-2 1 0 3z M15.500 8l2.500 2-1.500 2z" fill="#f1f1f1" stroke="none" /></svg>
        <div className="ml-[18px] h-[3px] w-[11px] bg-[#666]" />
        <div className="ml-[5px] flex h-[17px] w-[150px] items-center"><div className="h-px w-[72px] bg-[#a5a5a5]" /><div className="h-[17px] w-[6px] bg-[#666]" /><div className="h-px flex-1 bg-[#a5a5a5]" /></div>
        <svg className="ml-[5px] h-[13px] w-[13px]" viewBox="0 0 13 13" stroke="#666" strokeWidth="2.600"><path d="M0 6.500h13M6.500 0v13" /></svg>
        <T c="ml-[18px] w-[41px] text-[15px] tracking-[0.5px]">100%</T>
      </footer>
      <div className="flex h-[11px] shrink-0 overflow-hidden bg-[#470006]">
        <div className="ml-[596px] h-full w-[73px] bg-[#a4202b]" />
        <T c="ml-[1093px] mt-[4px] w-[41px] text-[15px] tracking-[0.3px] text-white">09:48</T>
        <div className="ml-[110px] h-full w-px bg-[#8a5a5e]" />
      </div>
    </div>
  );
}
